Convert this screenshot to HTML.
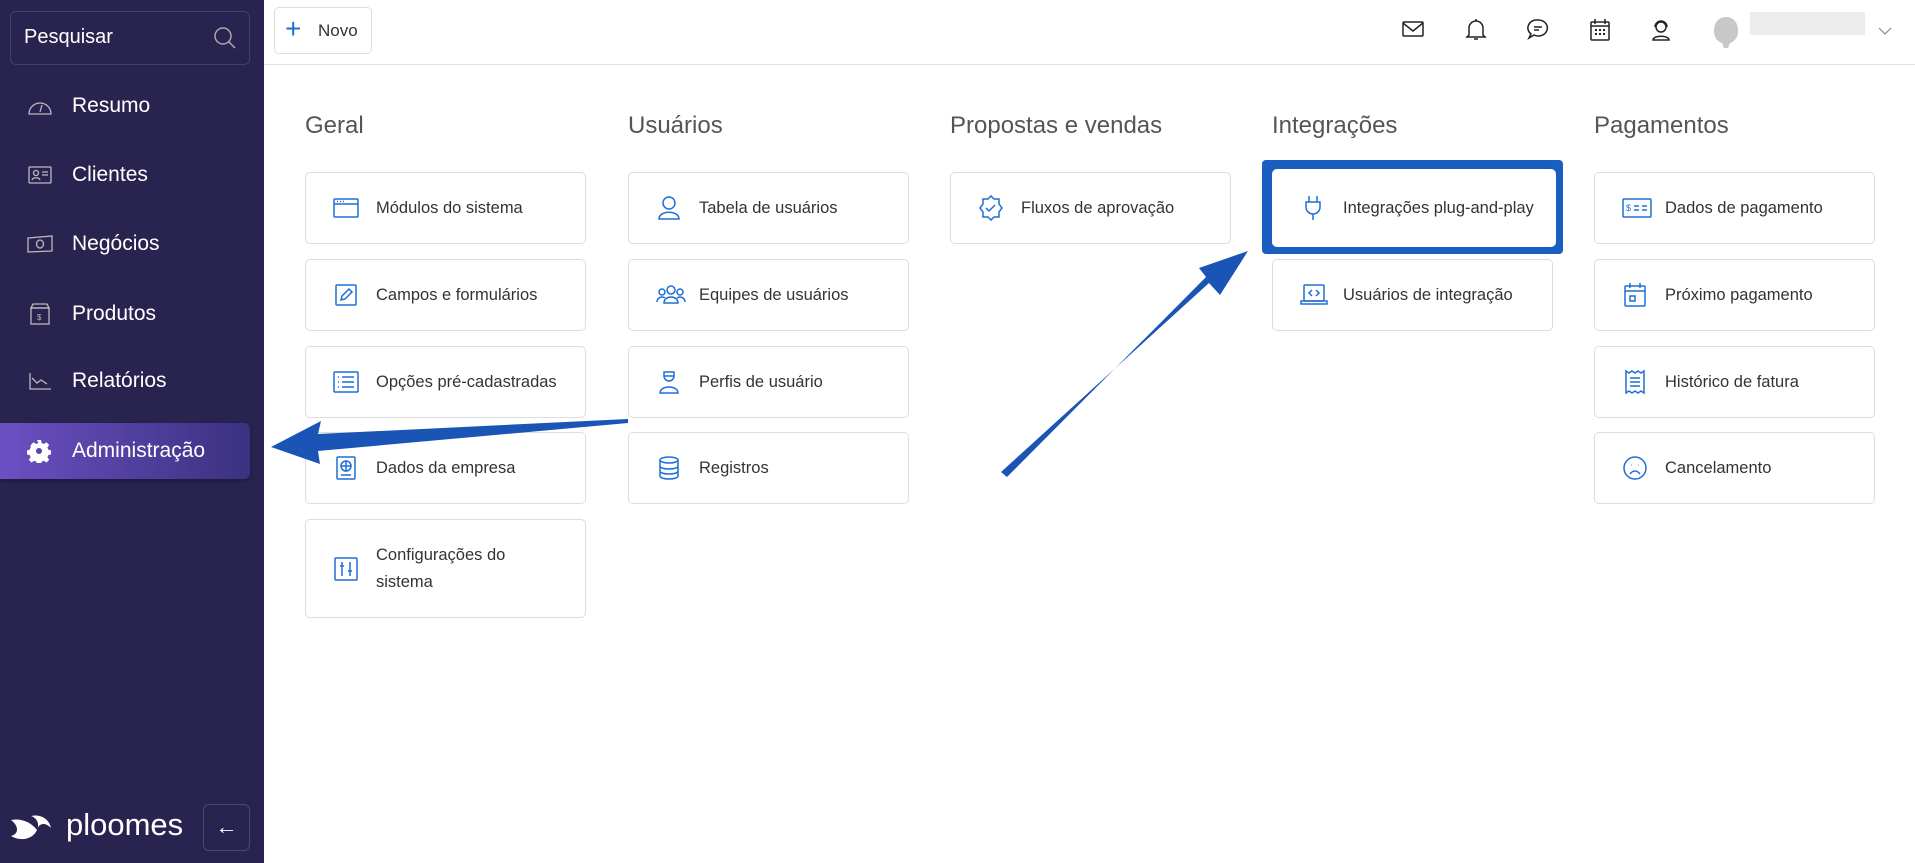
<!DOCTYPE html>
<html><head><meta charset="utf-8"><style>
*{box-sizing:border-box;margin:0;padding:0}
body{width:1915px;height:863px;overflow:hidden;background:#fff;font-family:"Liberation Sans",sans-serif;position:relative}
.side{position:absolute;left:0;top:0;width:264px;height:863px;background:#29244f}
.search{position:absolute;left:10px;top:11px;width:240px;height:54px;border:1px solid #443e6c;border-radius:6px;color:#fff;font-size:20px;padding:14px 0 0 13px}
.nav{position:absolute;left:0;width:250px;height:56px;color:#fff;font-size:21px;display:flex;align-items:center}
.nav svg{position:absolute;left:27px}
.nav span{position:absolute;left:72px}
.active{background:linear-gradient(90deg,#6b50c2,#3b3180);border-radius:0 6px 6px 0;box-shadow:0 2px 4px rgba(0,0,0,.3)}
.top{position:absolute;left:264px;top:0;right:0;height:65px;border-bottom:1px solid #e2e2e2}
.novo{position:absolute;left:274px;top:7px;width:98px;height:47px;border:1px solid #ddd;border-radius:5px;font-size:17px;color:#333;padding:13px 0 0 43px}
.col h2{position:absolute;font-weight:normal;font-size:24px;color:#555;top:112px}
.card{position:absolute;width:281px;height:72px;border:1px solid #ddd;border-radius:5px;background:#fff;font-size:16.5px;color:#333;display:flex;align-items:center;padding-left:70px;line-height:27px}
.card svg{position:absolute;left:27px;top:50%;margin-top:-13px}
.ic{position:absolute;top:18px}
</style></head><body>
<div class="side">
<div class="search">Pesquisar<svg style="position:absolute;right:12px;top:14px" width="24" height="24" viewBox="0 0 24 24" fill="none" stroke="#aaa" stroke-width="1.5"><circle cx="10" cy="10" r="8"/><path d="M16 16l6 6"/></svg></div>
<div class="nav" style="top:78px"><svg width="26" height="20" viewBox="0 0 26 20" fill="none" stroke="#bbb" stroke-width="1.3"><path d="M2 18a11 11 0 1 1 22 0z"/><path d="M13 16l2-7"/></svg><span>Resumo</span></div>
<div class="nav" style="top:147px"><svg width="26" height="20" viewBox="0 0 26 20" fill="none" stroke="#bbb" stroke-width="1.3"><rect x="2" y="2" width="22" height="16" rx="1"/><circle cx="9" cy="8" r="2.5"/><path d="M5 15c1-3 7-3 8 0M15 7h6M15 10h6"/></svg><span>Clientes</span></div>
<div class="nav" style="top:216px"><svg width="26" height="20" viewBox="0 0 26 20" fill="none" stroke="#bbb" stroke-width="1.3"><path d="M1 4l24-2v15L1 18z"/><ellipse cx="13" cy="10" rx="3.5" ry="4"/></svg><span>Negócios</span></div>
<div class="nav" style="top:286px"><svg width="26" height="22" viewBox="0 0 26 22" fill="none" stroke="#bbb" stroke-width="1.3"><rect x="4" y="5" width="18" height="16"/><path d="M6 1h14l2 4H4z"/><text x="10" y="17" font-size="8" fill="#bbb" stroke="none">$</text></svg><span>Produtos</span></div>
<div class="nav" style="top:353px"><svg width="26" height="20" viewBox="0 0 26 20" fill="none" stroke="#bbb" stroke-width="1.3"><path d="M3 2v16h21M5 7l5 5 4-3 6 4"/></svg><span>Relatórios</span></div>
<div class="nav active" style="top:423px"><svg width="24" height="24" viewBox="0 0 24 24"><path d="M10 1h4l.6 3 2.3 1 2.5-1.8 2.8 2.8-1.8 2.5 1 2.3 3 .6v4l-3 .6-1 2.3 1.8 2.5-2.8 2.8-2.5-1.8-2.3 1-.6 3h-4l-.6-3-2.3-1-2.5 1.8-2.8-2.8 1.8-2.5-1-2.3-3-.6v-4l3-.6 1-2.3L3.8 6 6.6 3.2 9.1 5l2.3-1z" fill="#fff"/><circle cx="12" cy="12" r="3" fill="#5b45a8"/></svg><span>Administração</span></div>
<svg style="position:absolute;left:9px;top:810px" width="50" height="36" viewBox="0 0 50 36"><path d="M2 10c10-2 20 2 26 10 3-6 0-12-6-14 10-2 18 3 20 12-6-6-12-5-14 2-4 9-16 12-26 6 8-2 8-10 0-16z" fill="#fff"/></svg>
<div style="position:absolute;left:66px;top:807px;color:#fff;font-size:31px">ploomes</div>
<div style="position:absolute;left:203px;top:804px;width:47px;height:47px;border:1px solid #4d4776;border-radius:6px;color:#fff;font-size:22px;text-align:center;line-height:44px">←</div>
</div>
<div class="top"></div>
<div class="novo"><span style="position:absolute;left:10px;top:5px;color:#1d6fd6;font-size:28px;font-weight:300">+</span>Novo</div>
<svg class="ic" style="left:1402px" width="22" height="22" viewBox="0 0 22 22" fill="none" stroke="#222" stroke-width="1.5"><rect x="1" y="4" width="20" height="14" rx="1"/><path d="M1 5l10 8 10-8"/></svg>
<svg class="ic" style="left:1465px" width="22" height="24" viewBox="0 0 22 24" fill="none" stroke="#222" stroke-width="1.5"><path d="M4 17V10a7 7 0 0 1 14 0v7l2 2H2zM11 1v2M9 21h4"/></svg>
<svg class="ic" style="left:1527px" width="22" height="22" viewBox="0 0 22 22" fill="none" stroke="#222" stroke-width="1.5"><path d="M11 2a9 8 0 1 1-4 15l-5 3 2-4A9 8 0 0 1 11 2z"/><path d="M7 9h8M7 12h5"/></svg>
<svg class="ic" style="left:1589px" width="22" height="24" viewBox="0 0 22 24" fill="none" stroke="#222" stroke-width="1.5"><rect x="2" y="4" width="18" height="18" rx="1"/><path d="M2 8h18M6 1v5M16 1v5"/><path d="M6 12h2M10 12h2M14 12h2M6 16h2M10 16h2M14 16h2" stroke-width="2"/></svg>
<svg class="ic" style="left:1650px" width="22" height="24" viewBox="0 0 22 24" fill="none" stroke="#222" stroke-width="1.5"><circle cx="11" cy="9" r="5"/><path d="M5 9a6 6 0 0 1 12 0M3 22c0-5 16-5 16 0z"/></svg>
<svg style="position:absolute;left:1712px;top:16px" width="28" height="32" viewBox="0 0 28 32"><path d="M14 1c8 0 12 6 12 14 0 8-5 11-8 12l-2 5h-4l-2-5C7 26 2 23 2 15 2 7 6 1 14 1z" fill="#c8c8c8"/></svg>
<div style="position:absolute;left:1750px;top:12px;width:115px;height:23px;background:#ececec"></div>
<svg style="position:absolute;left:1878px;top:27px" width="14" height="8" viewBox="0 0 14 8" fill="none" stroke="#888" stroke-width="1.2"><path d="M1 1l6 6 6-6"/></svg>

<div class="col"><h2 style="left:305px">Geral</h2><h2 style="left:628px">Usuários</h2><h2 style="left:950px">Propostas e vendas</h2><h2 style="left:1272px">Integrações</h2><h2 style="left:1594px">Pagamentos</h2></div>
<div style="position:absolute;left:1262px;top:160px;width:301px;height:94px;background:#1a5fc0;border-radius:4px"></div>
<div class="card" style="left:305px;top:172px"><svg width="26" height="26" viewBox="0 0 26 26" fill="none" stroke="#1d6fd6" stroke-width="1.5"><rect x="1" y="4" width="24" height="18" rx="1"/><path d="M1 9h24M4 6.5h1M7 6.5h1M10 6.5h1"/></svg>Módulos do sistema</div>
<div class="card" style="left:305px;top:259px"><svg width="26" height="26" viewBox="0 0 26 26" fill="none" stroke="#1d6fd6" stroke-width="1.5"><rect x="3" y="3" width="20" height="20" rx="1"/><path d="M8 18l1-4 7-7 3 3-7 7z"/></svg>Campos e formulários</div>
<div class="card" style="left:305px;top:346px"><svg width="26" height="26" viewBox="0 0 26 26" fill="none" stroke="#1d6fd6" stroke-width="1.5"><rect x="1" y="3" width="24" height="20" rx="1"/><path d="M5 8h1M5 13h1M5 18h1M9 8h12M9 13h12M9 18h12"/></svg>Opções pré-cadastradas</div>
<div class="card" style="left:305px;top:432px"><svg width="26" height="26" viewBox="0 0 26 26" fill="none" stroke="#1d6fd6" stroke-width="1.5"><rect x="4" y="2" width="18" height="22" rx="1"/><circle cx="13" cy="11" r="5"/><path d="M8 11h10M13 6v10M8 20h10"/></svg>Dados da empresa</div>
<div class="card" style="left:305px;top:519px;height:99px"><svg width="26" height="26" viewBox="0 0 26 26" fill="none" stroke="#1d6fd6" stroke-width="1.5"><rect x="2" y="2" width="22" height="22" rx="1"/><path d="M9 6v14M17 6v14M7 10h4M15 15h4"/></svg>Configurações do<br>sistema</div>

<div class="card" style="left:628px;top:172px"><svg width="26" height="26" viewBox="0 0 26 26" fill="none" stroke="#1d6fd6" stroke-width="1.5"><circle cx="13" cy="8" r="6"/><path d="M3 24c0-9 20-9 20 0z"/></svg>Tabela de usuários</div>
<div class="card" style="left:628px;top:259px"><svg width="30" height="26" viewBox="0 0 30 26" fill="none" stroke="#1d6fd6" stroke-width="1.5"><circle cx="15" cy="8" r="4"/><circle cx="6" cy="10" r="3"/><circle cx="24" cy="10" r="3"/><path d="M8 21c0-8 14-8 14 0zM1 20c0-5 6-6 8-4M29 20c0-5-6-6-8-4"/></svg>Equipes de usuários</div>
<div class="card" style="left:628px;top:346px"><svg width="26" height="26" viewBox="0 0 26 26" fill="none" stroke="#1d6fd6" stroke-width="1.5"><path d="M8 3h10v4H8zM8 7a5 5 0 0 0 10 0M4 24c0-8 18-8 18 0z"/></svg>Perfis de usuário</div>
<div class="card" style="left:628px;top:432px"><svg width="26" height="26" viewBox="0 0 26 26" fill="none" stroke="#1d6fd6" stroke-width="1.5"><ellipse cx="13" cy="5" rx="9" ry="3"/><path d="M4 5v16c0 4 18 4 18 0V5M4 11c0 4 18 4 18 0M4 16c0 4 18 4 18 0"/></svg>Registros</div>

<div class="card" style="left:950px;top:172px"><svg width="26" height="26" viewBox="0 0 26 26" fill="none" stroke="#1d6fd6" stroke-width="1.5"><path d="M13 1l3 3h5v5l3 4-3 4v5h-5l-3 3-3-3H5v-5l-3-4 3-4V4h5z"/><path d="M8 13l3 3 6-6"/></svg>Fluxos de aprovação</div>

<div class="card" style="left:1272px;top:169px;height:78px;width:284px;border-color:#fff"><svg width="26" height="26" viewBox="0 0 26 26" fill="none" stroke="#1d6fd6" stroke-width="1.5"><path d="M9 1v6M17 1v6M6 7h14v5a7 7 0 0 1-14 0zM13 19v6"/></svg>Integrações plug-and-play</div>
<div class="card" style="left:1272px;top:259px"><svg width="28" height="26" viewBox="0 0 28 26" fill="none" stroke="#1d6fd6" stroke-width="1.5"><rect x="4" y="3" width="20" height="16" rx="1"/><path d="M1 19h26v3H1zM12 8l-3 3 3 3M16 8l3 3-3 3"/></svg>Usuários de integração</div>

<div class="card" style="left:1594px;top:172px"><svg width="30" height="26" viewBox="0 0 30 26" fill="none" stroke="#1d6fd6" stroke-width="1.5"><rect x="1" y="4" width="28" height="18" rx="1"/><text x="4" y="16" font-size="9" fill="#1d6fd6" stroke="none">$</text><path d="M12 11h5M20 11h5M12 15h5M20 15h5"/></svg>Dados de pagamento</div>
<div class="card" style="left:1594px;top:259px"><svg width="26" height="26" viewBox="0 0 26 26" fill="none" stroke="#1d6fd6" stroke-width="1.5"><rect x="3" y="4" width="20" height="20" rx="1"/><path d="M3 9h20M8 1v5M18 1v5M8 14h5v5H8z"/></svg>Próximo pagamento</div>
<div class="card" style="left:1594px;top:346px"><svg width="26" height="26" viewBox="0 0 26 26" fill="none" stroke="#1d6fd6" stroke-width="1.5"><path d="M4 2l3 2 3-2 3 2 3-2 3 2 3-2v22l-3-2-3 2-3-2-3 2-3-2-3 2zM8 9h10M8 13h10M8 17h10"/></svg>Histórico de fatura</div>
<div class="card" style="left:1594px;top:432px"><svg width="26" height="26" viewBox="0 0 26 26" fill="none" stroke="#1d6fd6" stroke-width="1.5"><circle cx="13" cy="13" r="11"/><path d="M9 10h.5M16.5 10h.5M8 19c3-4 7-4 10 0"/></svg>Cancelamento</div>

<svg style="position:absolute;left:0;top:0" width="1915" height="863">
<path d="M628 419L318 434 321 421 271 447 320 464 318 451 628 423z" fill="#1a55b5"/>
<path d="M1001 472L1209 283 1220 295 1248 251 1199 268 1206 277 1007 477z" fill="#1a55b5"/>
</svg>
</body></html>
